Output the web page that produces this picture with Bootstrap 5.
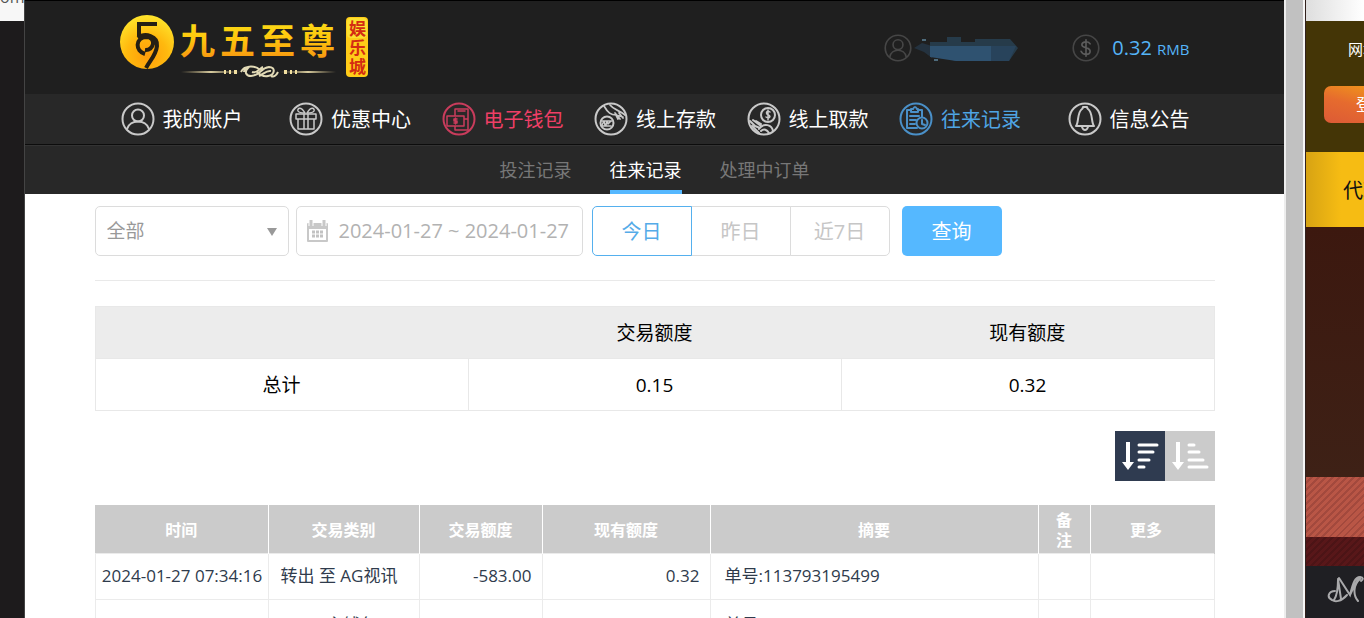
<!DOCTYPE html>
<html lang="zh-CN">
<head>
<meta charset="utf-8">
<meta name="viewport" content="width=device-width, initial-scale=1">
<title>往来记录</title>
<link href="https://cdn.jsdelivr.net/npm/bootstrap@5.3.0/dist/css/bootstrap.min.css" rel="stylesheet">
<style>
body{font-family:"Open Sans","Noto Sans CJK SC",sans-serif;background:#fff;color:#000;line-height:1.5}
a{text-decoration:none}
.back-left{width:25px;background:#1d1b1c;border-right:1px solid #444}
.back-left-top{height:21px;background:#f7f7f7}
.back-left-word{height:5px;font-size:16px;line-height:16px;color:#555}
.win{min-width:0;background:#fff}
.inner-wrap{width:100%;max-width:1120px;margin:0 auto}
.top-head{height:94px;background:#1f1f1f;border-top:1px solid #000}
.pad-line{padding:0 25px 0 26px}
.logo-link{margin-left:-1px}
.logo-link svg{display:block}
.dollar-amt{font-size:20px;color:#55b4f8}
.dollar-amt span{font-size:15px}
.main-menu{height:51px;background:#282828;border-bottom:1px solid #0c0c0c}
.main-menu a{color:#fff;font-size:20px;gap:8px}
.main-menu a span{padding-top:2px}
.main-menu a.is-red{color:#ee3f66}
.main-menu a.is-blue{color:#4fa5e4}
.main-menu svg{color:#c9c9c9}
.main-menu .is-red svg{color:#c93c5c}
.main-menu .is-blue svg{color:#4a90c8}
.ico{fill:none;stroke:currentColor;stroke-width:2;stroke-linecap:round;stroke-linejoin:round}
.sub-menu{height:49px;background:#282828;border-top:1px solid #333;gap:38px}
.sub-menu a{font-size:18px;line-height:48px;color:#777;border-bottom:4px solid transparent;height:48px}
.sub-menu a.active{color:#fff;border-color:#55b8ff}
.filters{padding-top:12px;padding-bottom:24px;border-bottom:1px solid #e9e9e9}
.field{height:50px;border:1px solid #dcdcdc;border-radius:5px;font-size:19px;color:#999;background:#fff}
.kind-box{width:194px;margin-right:7px}
.kind-box select{width:100%;padding:0 11px;appearance:none}
.kind-box svg{position:absolute;right:11px;top:22px;pointer-events:none}
.date-box{width:287px;margin-right:9px;padding-left:9px;gap:10px}
.date-box input{border:0;outline:0;padding:0;font-size:20px;color:#b2b2b2;width:100%;min-width:0;background:none}
.days .btn{width:100px;height:50px;font-size:20px;line-height:50px;color:#c6c6c6;border:1px solid #dcdcdc;border-radius:5px;background:#fff;padding:0}
.days .btn.active{color:#55abe8;border-color:#55b0ee;background:#fff}
.query{width:100px;height:50px;margin-left:12px;border:0;border-radius:5px;background:#55b8ff;color:#fff;font-size:20px;line-height:52px;padding:0}
.sum-table{margin:25px 0 20px;table-layout:fixed;font-size:19px;text-align:center;width:100%;border:1px solid #e8e8e8}
.sum-table th{font-weight:400;background:#ececec;height:52px;padding:2px 0 0}
.sum-table td{height:52px;padding:2px 0 0;border:1px solid #e8e8e8}
.sort-btn{width:50px;height:50px;border:0;padding:0;background:#cbcbcb}
.sort-btn.active{background:#2f3b50}
.sort-btn svg{display:block}
.rec-table{margin-top:24px;table-layout:fixed;width:100%;font-size:17px;color:#2f3b4c;border-collapse:collapse}
.rec-table th{background:#cbcbcb;color:#fff;font-size:16px;line-height:20px;font-weight:700;text-align:center;height:48px;padding:4px 14px 2px;border-right:1px solid #fff}
.rec-table th:last-child{border-right-color:#cbcbcb;padding-right:26px}
.rec-table td{height:46px;padding:0 10px;border:1px solid #ebebeb;white-space:nowrap;line-height:24px}
.rec-table .tall td{height:52px}
.rec-table td:first-child{padding:0 0 0 1px;text-align:center}
.rec-table td.kind{padding-left:12px}
.rec-table td.memo{padding-left:14px}
.scroll-rail{width:21px;background:#c1c1c1;border-left:2px solid #ededed;border-right:2px solid #f6f6f6}
.back-right{width:59px;white-space:nowrap;border-left:1px solid #30201c}
.r-top{height:21px;background:linear-gradient(90deg,#dedede,#fff)}
.r-olive{height:131px;background:#443506;color:#fff;font-size:15px;line-height:20px;padding:18px 0 0 18px}
.r-olive span{padding-left:24px}
.r-login{display:block;width:80px;height:37px;margin-top:27px;border:0;border-radius:7px 0 0 7px;padding:0 0 0 32px;text-align:left;color:#fff;font-size:17px;background:linear-gradient(15deg,#dc5a36,#e66b2e 45%,#f4a414)}
.r-gold{height:75px;background:linear-gradient(90deg,#d7a313,#f6bc13 60%);color:#111;font-size:20px;line-height:77px;padding-left:37px}
.r-brown{height:250px;background:linear-gradient(#3c180f,#3e2116)}
.r-stripe{height:60px;background:repeating-linear-gradient(135deg,#b95646 0 3px,#a3493d 3px 5px)}
.r-wine{height:29px;background:repeating-linear-gradient(135deg,#581719 0 3px,#4c1416 3px 5px)}
.r-foot{background:#1f1f23;padding:9px 0 0 21px}
</style>
</head>
<body class="vh-100 overflow-hidden">
<div class="d-flex vh-100 overflow-hidden">
  <div class="back-left flex-shrink-0">
    <div class="back-left-top overflow-hidden"><div class="back-left-word overflow-hidden d-flex align-items-end">ome</div></div>
  </div>

  <div class="win flex-grow-1 overflow-hidden">
    <header class="top-head">
      <div class="inner-wrap pad-line d-flex align-items-center h-100">
        <a href="#" class="logo-link" aria-label="九五至尊娱乐城">
          <svg width="248" height="68" viewBox="0 0 248 68">
            <defs>
              <linearGradient id="gold" x1="0" y1="0" x2="0" y2="1"><stop offset="0" stop-color="#f5e51b"/><stop offset=".5" stop-color="#ffc70d"/><stop offset="1" stop-color="#f58a12"/></linearGradient>
              <radialGradient id="ball" cx=".5" cy=".75" r=".75"><stop offset="0" stop-color="#ff9d0a"/><stop offset=".5" stop-color="#ffb90e"/><stop offset="1" stop-color="#ffe52c"/></radialGradient>
              <linearGradient id="rule"><stop offset="0" stop-color="#bba97a" stop-opacity="0"/><stop offset=".5" stop-color="#d9cda0"/><stop offset="1" stop-color="#bba97a" stop-opacity="0"/></linearGradient>
            </defs>
            <circle cx="27" cy="28" r="27" fill="url(#ball)"/>
            <path d="M37 10H19V22M18 24C25 18 38 22 37 32C36 41 31 45 26 54M25 40C15 37 15 24 26 23C37 23 34 37 25 36" fill="none" stroke="#251f14" stroke-width="4"/>
            <g fill="url(#gold)" font-family="'Noto Sans CJK SC',sans-serif" font-weight="700" font-size="35"><text x="60 100 140 180" y="40">九五至尊</text></g>
            <rect x="61" y="57" width="60" height="2" fill="url(#rule)"/><rect x="160" y="57" width="56" height="2" fill="url(#rule)"/>
            <path d="M121 58Q124 52 128 54C124 58 126 62 131 62C140 62 140 54 149 53C156 53 155 61 148 62C142 63 139 60 137 58M124 58C125 50 136 52 140 56M132 58C137 60 140 54 143 53M139 62C144 60 146 56 151 57M158 58Q155 64 151 62" fill="none" stroke="#e2dab6" stroke-width="2"/>
            <path d="M104 58h2m3 0h2m3 0h3m47 0h3m3 0h2m3 0h2" stroke="#f1dfa0" stroke-width="4"/>
            <rect x="226" y="3" width="22" height="60" rx="4" fill="#ffcc18"/><rect x="227" y="4" width="20" height="20" rx="4" fill="#f9e83c" opacity=".7"/>
            <text fill="#d42b12" font-family="'Noto Sans CJK SC',sans-serif" font-weight="700" font-size="17"><tspan x="229" y="21">娱</tspan><tspan x="229" y="40">乐</tspan><tspan x="229" y="59">城</tspan></text>
          </svg>
        </a>
        <div class="ms-auto d-flex align-items-center">
          <svg class="ico" width="28" height="28" viewBox="0 0 34 34" style="color:#464646"><circle cx="17" cy="17" r="15.5"/><circle cx="17" cy="13" r="6"/><path d="M7 28C9 17 25 17 27 28"/></svg>
          <svg class="me-1" width="108" height="28" viewBox="0 0 108 28"><path d="M2 14L10 9 20 12V24L12 18Z" fill="#24323f"/><path d="M18 8H35V3H49V8H63V5H98L106 14L97 27H44L18 20Z" fill="#263b4a"/><path d="M18 12H79V27H44L18 23Z" fill="#2f5270"/><path d="M79 12H104L97 27H79Z" fill="#28435b"/><path d="M10 6h4M22 26h4" stroke="#7fb8d9" stroke-width="1"/></svg>
          <svg class="ico ms-5" width="28" height="28" viewBox="0 0 34 34" style="color:#464646"><circle cx="17" cy="17" r="15.5"/><path stroke="#5c5c5c" d="M17 7V27M22 12C20 8 12 9 12 13C12 18 22 15 22 21C22 26 13 26 11 21"/></svg>
          <div class="dollar-amt ms-2 ps-1">0.32 <span>RMB</span></div>
        </div>
      </div>
    </header>

    <nav class="main-menu">
      <div class="inner-wrap pad-line d-flex align-items-center justify-content-between h-100">
        <a href="#" class="d-flex align-items-center me-3"><svg class="ico" width="34" height="34" viewBox="0 0 34 34"><circle cx="17" cy="17" r="15.5"/><circle cx="17" cy="13.500" r="6"/><path d="M6 27C9 17 25 17 28 27"/></svg><span>我的账户</span></a>
        <a href="#" class="d-flex align-items-center"><svg class="ico" width="34" height="34" viewBox="0 0 34 34"><circle cx="17" cy="17" r="15.5"/><g stroke-width="1.5"><path d="M7 12H27V17H7ZM9 17V27H25V17M15 12V27M19 12V27"/><path d="M16 11C12 4 8 6 9 9Q10 11 16 11M18 11C22 4 26 6 25 9Q24 11 18 11"/></g></svg><span>优惠中心</span></a>
        <a href="#" class="is-red d-flex align-items-center"><svg class="ico" width="34" height="34" viewBox="0 0 34 34"><circle cx="17" cy="17" r="15.5"/><g stroke-width="1.5"><path d="M13 13V7H26V28H13V24M16 9H23M5 14H22V24H5ZM22 24V17H26M18 28H21"/><path d="M15 17H12V19H15V21H12M13.500 16V22"/></g></svg><span>电子钱包</span></a>
        <a href="#" class="d-flex align-items-center"><svg class="ico" width="34" height="34" viewBox="0 0 34 34"><circle cx="17" cy="17" r="15.5"/><circle cx="13" cy="21" r="6.500"/><path stroke-width="1.500" d="M8 23L10 19 11 23M12 23L13 19 14 22 17 19M8 19H18M8 24H17"/><path stroke-width="1.700" d="M10 4C14 11 17 13 22 13L29 15M16 3C20 8 25 8 31 13M21 11L26 17M22 13L24 17M25 11L29 16"/></svg><span>线上存款</span></a>
        <a href="#" class="d-flex align-items-center"><svg class="ico" width="34" height="34" viewBox="0 0 34 34"><circle cx="17" cy="17" r="15.5"/><circle cx="21" cy="13" r="7"/><path stroke-width="1.500" d="M23 10C20 8 18 11 21 13C25 14 22 17 19 15M21 8V18"/><path d="M3 19L8 24 13 26M6 18L14 24M9 19L14 22M12 27C17 20 25 23 26 29M5 24L12 31M14 29C17 26 20 28 22 31"/></svg><span>线上取款</span></a>
        <a href="#" class="is-blue d-flex align-items-center"><svg class="ico" width="34" height="34" viewBox="0 0 34 34"><circle cx="17" cy="17" r="15.5"/><path d="M12 8H8V26H18M19 8H23V15M12 10V7H14Q16 3 18 7H19V10ZM11 14H20M11 18H17M11 22H16"/><circle cx="23" cy="21" r="5.500"/><path d="M23 18V22L26 23"/></svg><span>往来记录</span></a>
        <a href="#" class="d-flex align-items-center ms-3"><svg class="ico" width="34" height="34" viewBox="0 0 34 34"><circle cx="17" cy="17" r="15.5"/><path d="M8 24C11 21 9 10 14 7Q15 6 15 5H19Q19 6 20 7C25 10 23 21 26 24ZM14 25Q15 28 17 28Q19 28 20 25"/></svg><span>信息公告</span></a>
      </div>
    </nav>
    <nav class="sub-menu d-flex justify-content-center">
      <a href="#">投注记录</a><a href="#" class="active" aria-current="page">往来记录</a><a href="#">处理中订单</a>
    </nav>

    <main class="inner-wrap">
      <form class="filters d-flex">
        <div class="kind-box position-relative">
          <select class="field" aria-label="交易类别"><option>全部</option></select>
          <svg width="12" height="8"><path d="M1 0H11L6 8Z" fill="#999"/></svg>
        </div>
        <label class="field date-box d-flex align-items-center">
          <svg class="flex-shrink-0" width="23" height="23" viewBox="0 0 23 23"><path d="M2 3H21Q22 3 22 4V21Q22 22 21 22H2Q1 22 1 21V4Q1 3 2 3Z" fill="#c8c8c8"/><path d="M3 9H20V20H3Z" fill="#fff"/><path d="M6 12h11M6 16h11" stroke="#c2c2c2" stroke-width="3" stroke-dasharray="3 1"/><path d="M5 0V6M18 0V6" stroke="#fff" stroke-width="5"/><path d="M5 0V6M18 0V6" stroke="#c8c8c8" stroke-width="3"/></svg>
          <input type="text" value="2024-01-27 ~ 2024-01-27" aria-label="日期">
        </label>
        <div class="btn-group days" role="group" aria-label="日期范围">
          <button type="button" class="btn active">今日</button><button type="button" class="btn">昨日</button><button type="button" class="btn">近7日</button>
        </div>
        <button type="button" class="btn query">查询</button>
      </form>

      <table class="sum-table">
        <thead><tr><th></th><th>交易额度</th><th>现有额度</th></tr></thead>
        <tbody><tr><td>总计</td><td>0.15</td><td>0.32</td></tr></tbody>
      </table>

      <div class="d-flex justify-content-end">
        <button type="button" class="sort-btn active" aria-label="降序"><svg width="50" height="50" viewBox="0 0 50 50"><path d="M13 11V34" stroke="#fff" stroke-width="4"/><path d="M7 31H19L13 39Z" fill="#fff"/><path d="M24 14H42M24 21H38M24 29H34M24 36H29" stroke="#fff" stroke-width="3" stroke-linecap="round"/></svg></button>
        <button type="button" class="sort-btn" aria-label="升序"><svg width="50" height="50" viewBox="0 0 50 50"><path d="M13 11V34" stroke="#fff" stroke-width="4"/><path d="M7 31H19L13 39Z" fill="#fff"/><path d="M24 14H29M24 21H34M24 29H38M24 36H42" stroke="#fff" stroke-width="3" stroke-linecap="round"/></svg></button>
      </div>

      <table class="rec-table">
        <colgroup><col style="width:173px"><col style="width:151px"><col style="width:123px"><col style="width:168px"><col><col style="width:52px"><col style="width:124px"></colgroup>
        <thead><tr><th>时间</th><th>交易类别</th><th>交易额度</th><th>现有额度</th><th>摘要</th><th>备注</th><th>更多</th></tr></thead>
        <tbody>
          <tr><td>2024-01-27 07:34:16</td><td class="kind">转出 至 AG视讯</td><td class="text-end">-583.00</td><td class="text-end">0.32</td><td class="memo">单号:113793195499</td><td></td><td></td></tr>
          <tr class="tall"><td></td><td><span class="ps-5">主钱包</span></td><td></td><td></td><td class="memo">单号</td><td></td><td></td></tr>
        </tbody>
      </table>
    </main>
  </div>

  <div class="scroll-rail flex-shrink-0"></div>
  <aside class="back-right flex-shrink-0 overflow-hidden d-flex flex-column">
    <div class="r-top"></div>
    <div class="r-olive"><span>网址</span><button type="button" class="r-login">登录</button></div>
    <div class="r-gold">代理</div>
    <div class="r-brown"></div>
    <div class="r-stripe"></div>
    <div class="r-wine"></div>
    <div class="r-foot flex-grow-1"><svg width="38" height="30" viewBox="0 0 38 30" fill="none" stroke="#a9a9ab" stroke-width="2" stroke-linecap="round"><path d="M11 4L14 24M12 3L23 20C26 8 28 2 33 2Q38 3 34 6M33 4C26 10 26 20 31 26M20 20C14 27 8 27 5 25C-1 22 2 16 8 16M11 5C11 15 9 22 7 25M23 20C26 14 28 8 32 3"/></svg></div>
  </aside>
</div>
<script src="https://cdn.jsdelivr.net/npm/bootstrap@5.3.0/dist/js/bootstrap.bundle.min.js"></script>
</body>
</html>
